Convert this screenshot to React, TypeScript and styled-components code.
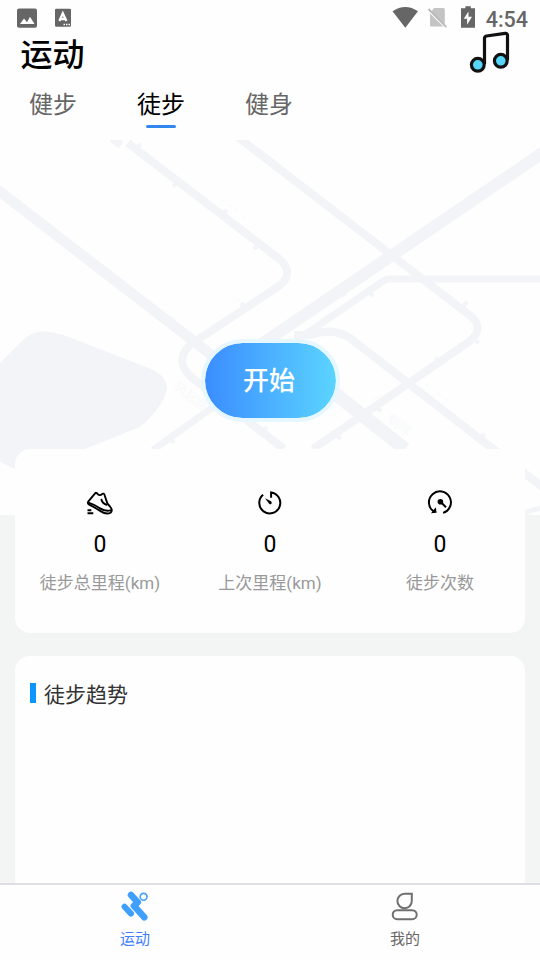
import React from "react";
import styled, { createGlobalStyle } from "styled-components";

const GlobalStyle = createGlobalStyle`
  * { box-sizing: border-box; }
  body {
    margin: 0;
    background: #f3f5f5;
    font-family: Roboto, "Noto Sans CJK SC", sans-serif;
  }
`;

const Screen = styled.div`
  display: flex;
  flex-direction: column;
  width: 540px;
  height: 960px;
  overflow: hidden;
  background: #f3f5f5;
`;

const StatusBar = styled.div`
  display: flex;
  justify-content: space-between;
  flex: none;
  height: 36px;
  padding: 0 12px 0 16px;
  background: #fefefe;
  color: #666;
`;

const StatusGroup = styled.div<{ $gap: number }>`
  display: flex;
  align-items: center;
  gap: ${(p) => p.$gap}px;
  height: 36px;
`;

const Clock = styled.span`
  font-size: 21.5px;
  font-weight: 500;
  line-height: 36px;
  padding-top: 3px;
`;

const Header = styled.header`
  display: flex;
  justify-content: space-between;
  flex: none;
  height: 44px;
  padding: 0 28px 0 20.5px;
  background: #fefefe;
`;

const Title = styled.h1`
  margin: -5px 0 0;
  font-size: 32px;
  font-weight: 500;
  line-height: 48px;
  color: #000;
`;

const MusicIcon = styled.svg`
  margin-top: -6px;
`;

const Tabs = styled.nav`
  display: flex;
  gap: 60px;
  flex: none;
  height: 60px;
  padding-left: 29px;
  background: #fefefe;
`;

const Tab = styled.div<{ $active?: boolean }>`
  display: flex;
  flex-direction: column;
  align-items: center;
  width: 48px;
  height: 48px;
  font-size: 24px;
  line-height: 50px;
  white-space: nowrap;
  color: ${(p) => (p.$active ? "#000" : "#666")};
`;

const TabMark = styled.span`
  flex: none;
  width: 30px;
  height: 3px;
  margin-top: -5px;
  border-radius: 2px;
  background: #3388f0;
`;

const Content = styled.main`
  flex: 1;
  min-height: 0;
  overflow: hidden;
`;

const MapArea = styled.section`
  display: grid;
  height: 375px;
  background: #fefefe;
  > * { grid-area: 1 / 1; }
`;

const StartButton = styled.button`
  justify-self: center;
  align-self: start;
  width: 139px;
  height: 83px;
  margin: 199px 0 0;
  padding: 0 2px 0 0;
  border: 4px solid #e6f7ff;
  border-radius: 42px;
  background: linear-gradient(90deg, #3b8dff, #5bd4ff) padding-box;
  color: #fff;
  font: 500 26px/1 Roboto, "Noto Sans CJK SC", sans-serif;
`;

const Card = styled.section<{ $height: number; $top: number }>`
  position: relative;
  height: ${(p) => p.$height}px;
  margin: ${(p) => p.$top}px 15px 0;
  border-radius: 15px;
  background: #fefefe;
`;

const Stats = styled.div`
  display: grid;
  grid-template-columns: repeat(3, 1fr);
  padding-top: 40px;
`;

const Stat = styled.div`
  display: flex;
  flex-direction: column;
  align-items: center;
`;

const StatValue = styled.div`
  margin-top: 13px;
  font-size: 23px;
  line-height: 30px;
  color: #000;
`;

const StatLabel = styled.div`
  margin-top: 11px;
  font-size: 17px;
  line-height: 24px;
  white-space: nowrap;
  color: #999;
`;

const TrendTitle = styled.h2`
  display: flex;
  align-items: center;
  gap: 8px;
  margin: 0;
  padding: 23px 0 0 15px;
  font-size: 21px;
  font-weight: 400;
  line-height: 32px;
  color: #333;
`;

const TrendMark = styled.span`
  width: 6px;
  height: 20px;
  margin-top: -4px;
  background: #0a95ff;
`;

const BottomBar = styled.nav`
  display: grid;
  grid-template-columns: 1fr 1fr;
  flex: none;
  height: 77px;
  border-top: 2px solid #dedee3;
  background: #fefefe;
`;

const BottomItem = styled.div<{ $active?: boolean }>`
  display: flex;
  flex-direction: column;
  align-items: center;
  padding-top: 6px;
  font-size: 15px;
  line-height: 22px;
  color: ${(p) => (p.$active ? "#3d7fff" : "#666")};
  > svg { margin-bottom: 5px; }
`;

const CityMap = () => (
  <svg width="540" height="375" viewBox="0 140 540 375" fill="none" stroke="#f3f4f8" strokeWidth="8">
    <path
      d="M0 363L20 343Q31 331 43 331.5Q56 332 69 337L151 369Q167 376 167 389Q163 407 140 427L85 449L35 470L15 469L0 462Z"
      fill="#f3f4f8"
      stroke="none"
    />
    <path d="M-10 184L235 373" strokeWidth="10.5" />
    <path d="M112 138L121 145M128 143L278 258Q296 272 279 286L190 345Q174 361 191 377L284 449" />
    <path d="M234 134L472 317Q484 329 470 341L313 449" />
    <path d="M560 141L250 352" strokeWidth="12" />
    <path d="M550 279H389Q386 279 382 282L300 338" strokeWidth="7" />
    <path d="M294 335H310Q333 327 350 338L408 383L493 449L545 489" />
    <path d="M290 358L405 449" strokeWidth="13.5" />
    <path d="M153 450L220 402" strokeWidth="7" />
    <path d="M518 518Q528 509 545 508" strokeWidth="5" />
    <g strokeWidth="4">
      <path d="M136 148l5-4M173 186l6-4M222 214l5-4M254 249l5-4M241 303l5 5M340 291l5 5M369 292l4 4M463 306l4-4M435 358l5 5M476 341l3 2M377 408l4 3M336 435l5 4M480 438l5-4M170 439l4 4M262 431l5-4" />
    </g>
    <g fill="#f8f9fb" stroke="none" fontSize="13" fontFamily="Noto Sans CJK SC, sans-serif">
      <text transform="matrix(.8 .6 -.4 .85 174 389)">风起路</text>
      <text transform="matrix(.8 .6 -.4 .85 387 421)">朝晖</text>
    </g>
    <g stroke="#f8f9fb" strokeWidth="1">
      <path d="M220 199l3 2M228 204l5 3M235 209l3 2M242 216l4 3M166 310l5 3M172 316l5 4M234 302l6-3M372 400l8-4M426 384l3 2M437 393l4 3M444 397l4 4" />
    </g>
  </svg>
);

const ShoeIcon = () => (
  <svg width="28" height="28" viewBox="0 0 28 28" fill="none" stroke="#000" strokeWidth="1.9" strokeLinecap="round" strokeLinejoin="round">
    <path d="M2.2 12.6L9.3 4.1Q10 3.4 11 4.3Q13.7 7.6 16.3 4.8Q18.1 4 18.7 6.2L20 10.5Q20.7 14.5 24 17.5Q27.2 21.2 24.5 23.7Q20.5 26 14.5 22.1Q8.2 18.2 3.2 15.7Q1.2 14.5 2.2 12.6Z" />
    <path d="M3 13.8Q8.5 15.5 13.5 19.1Q19 22.7 24.5 21.4M15.5 10.8Q16.2 14.2 20.6 15.8" />
    <path d="M1.5 21.2H5.3M1.5 24.3H7.3" strokeLinecap="butt" />
  </svg>
);

const TimerIcon = () => (
  <svg width="28" height="28" viewBox="0 0 28 28" fill="none" stroke="#000" strokeWidth="2">
    <path d="M7.1 5.8A10.5 10.5 0 1 0 15.1 3.5V8.8" />
    <path d="M9 9.2L13.1 14.8Q14.4 15.8 15.5 14.8Q16.2 13.4 15 12.3Z" fill="#000" stroke="none" />
  </svg>
);

const CountIcon = () => (
  <svg width="28" height="28" viewBox="0 0 28 28" fill="none" stroke="#000" strokeWidth="2">
    <path d="M7.5 22.3A11 11 0 1 1 17.1 23.9" />
    <circle cx="14.4" cy="12.8" r="2.8" fill="#000" stroke="none" />
    <path d="M15 13.3L20 18.3" />
    <path d="M9.8 18.2L10.6 23.8L5 24.2Z" fill="#000" stroke="none" />
  </svg>
);

const stats = [
  { label: "徒步总里程(km)", value: 0, Icon: ShoeIcon },
  { label: "上次里程(km)", value: 0, Icon: TimerIcon },
  { label: "徒步次数", value: 0, Icon: CountIcon },
];

export default function App() {
  return (
    <Screen>
      <GlobalStyle />
      <StatusBar>
        <StatusGroup $gap={17}>
          <svg width="21" height="20" viewBox="0 0 21 20">
            <rect x="1" y=".5" width="20" height="19.3" rx="2" fill="#666" />
            <path d="M4 16L8 10.5L11 14.2L14 8.7L18.5 16Z" fill="#fff" />
          </svg>
          <svg width="18" height="20" viewBox="0 0 18 20">
            <rect x="1" y=".8" width="16" height="18" rx="1.3" fill="#666" />
            <path d="M5.4 13L8.8 5.2L12.4 13M6.5 11H11" fill="none" stroke="#fff" strokeWidth="2.3" />
            <path d="M9.5 16.5H11M12 16.5H13.5M14.5 16.5H16" stroke="#fff" strokeWidth="1.5" />
          </svg>
        </StatusGroup>
        <StatusGroup $gap={0}>
          <svg width="94" height="36" viewBox="392 0 94 36">
            <path d="M392.5 11.3Q405.3 2.5 418 11.3L405.3 27.7Z" fill="#666" />
            <path d="M434 8H443.2Q444.8 8 444.8 9.6V24.4L431.5 11.4Z" fill="#c4c4c4" />
            <path d="M430 13.4L443.2 26.5H431.5Q430 26.5 430 25Z" fill="#c4c4c4" />
            <path d="M428.5 9L446.3 27.2" stroke="#b9b9b9" strokeWidth="1.8" />
            <path d="M465.4 6.2H470.8V8.3H475V27.8H461V8.3H465.4Z" fill="#666" />
            <path d="M468.5 11.5L463.8 18.8H467.1V24.7L472 16.8H468.5Z" fill="#fff" />
          </svg>
          <Clock>4:54</Clock>
        </StatusGroup>
      </StatusBar>
      <Header>
        <Title>运动</Title>
        <MusicIcon width="44" height="46" viewBox="468 30 44 46" fill="none" stroke="#111" strokeWidth="3.2" strokeLinejoin="round">
          <path d="M484.5 64V38.5Q484.5 36.5 486.5 36L505 33.4Q507.5 33 507.5 35.3V60" />
          <circle cx="477.8" cy="64.8" r="6.4" fill="#55d6fa" />
          <circle cx="500.8" cy="60.8" r="6.4" fill="#55d6fa" />
        </MusicIcon>
      </Header>
      <Tabs>
        <Tab>健步</Tab>
        <Tab $active>徒步<TabMark /></Tab>
        <Tab>健身</Tab>
      </Tabs>
      <Content>
        <MapArea>
          <CityMap />
          <StartButton>开始</StartButton>
        </MapArea>
        <Card $height={184} $top={-66}>
          <Stats>
            {stats.map(({ label, value, Icon }) => (
              <Stat key={label}>
                <Icon />
                <StatValue>{value}</StatValue>
                <StatLabel>{label}</StatLabel>
              </Stat>
            ))}
          </Stats>
        </Card>
        <Card $height={260} $top={23}>
          <TrendTitle><TrendMark />徒步趋势</TrendTitle>
        </Card>
      </Content>
      <BottomBar>
        <BottomItem $active>
          <svg width="30" height="32" viewBox="0 0 30 32" fill="none" stroke="#409eff" strokeLinecap="round" strokeLinejoin="round">
            <path d="M11 4L17.7 11.3L13.8 14.8L24.3 26.3" strokeWidth="6.5" />
            <path d="M4.6 15.8L11 22.6" strokeWidth="6" />
            <circle cx="23.6" cy="5.8" r="3.4" strokeWidth="1.6" />
          </svg>
          运动
        </BottomItem>
        <BottomItem>
          <svg width="30" height="32" viewBox="0 0 30 32" fill="none" stroke="#707070" strokeWidth="2">
            <path d="M14.5 2.8H21.8V9.8A7.2 7.2 0 1 1 14.5 2.8Z" />
            <rect x="2.7" y="19.2" width="24" height="9" rx="4.5" />
          </svg>
          我的
        </BottomItem>
      </BottomBar>
    </Screen>
  );
}
